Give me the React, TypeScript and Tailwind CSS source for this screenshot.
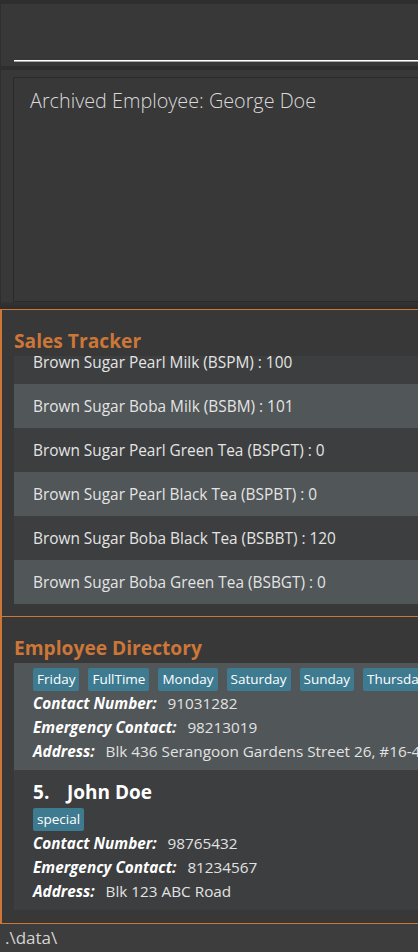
import React from "react";

const sales = [
  "Brown Sugar Pearl Milk (BSPM) : 100",
  "Brown Sugar Boba Milk (BSBM) : 101",
  "Brown Sugar Pearl Green Tea (BSPGT) : 0",
  "Brown Sugar Pearl Black Tea (BSPBT) : 0",
  "Brown Sugar Boba Black Tea (BSBBT) : 120",
  "Brown Sugar Boba Green Tea (BSBGT) : 0",
];

type Emp = {
  idx: number;
  name: string;
  tags: string[];
  contact: string;
  emergency: string;
  address: string;
};

const employees: Emp[] = [
  {
    idx: 4,
    name: "George Doe",
    tags: ["Friday", "FullTime", "Monday", "Saturday", "Sunday", "Thursday"],
    contact: "91031282",
    emergency: "98213019",
    address: "Blk 436 Serangoon Gardens Street 26, #16-43",
  },
  {
    idx: 5,
    name: "John Doe",
    tags: ["special"],
    contact: "98765432",
    emergency: "81234567",
    address: "Blk 123 ABC Road",
  },
];

function Field({ label, value, h }: { label: string; value: string; h: string }) {
  return (
    <div className={`${h} flex items-center text-[15.3px]`}>
      <span className="font-bold italic text-white mr-[11px]">{label}</span>
      <span className="text-[#e2e2e2]">{value}</span>
    </div>
  );
}

function Card({ e, light, scrolled }: { e: Emp; light: boolean; scrolled?: boolean }) {
  return (
    <div
      className={`pl-[19px] pb-[6px] flex flex-col whitespace-nowrap ${
        scrolled ? "pt-[5px]" : "pt-[8px]"
      } ${light ? "bg-[#515658]" : "bg-[#3c3e3f]"}`}
    >
      {!scrolled && (
        <div className="h-[28px] mb-[2px] flex items-center text-[19px] font-bold text-white">
          <span className="w-[34px]">{e.idx}.</span>
          <span>{e.name}</span>
        </div>
      )}
      <div className="h-[23px] flex gap-[9px]">
        {e.tags.map((t) => (
          <span
            key={t}
            className="h-[23px] px-[4px] flex items-center rounded-[2px] bg-[#3e7b91] text-white text-[13.5px]"
          >
            {t}
          </span>
        ))}
      </div>
      <Field label="Contact Number:" value={e.contact} h="h-[24px]" />
      <Field label="Emergency Contact:" value={e.emergency} h="h-[24px]" />
      <Field label="Address:" value={e.address} h="h-[25px]" />
    </div>
  );
}

export default function App() {
  return (
    <div className="w-[418px] h-[952px] overflow-hidden bg-[#383838] flex flex-col font-['Open_Sans','Noto_Sans',sans-serif]">
      {/* command box */}
      <div className="h-[70px] shrink-0 flex flex-col border-l border-[#2e2e2e]">
        <div className="h-[4px] bg-[#2e2e2e]" />
        <div className="flex-1" />
        <div className="ml-[13px] h-[1px] bg-white" />
        <div className="ml-[13px] h-[1px] bg-[#a8a8a8]" />
        <div className="h-[4px]" />
        <div className="h-[4px] bg-[#2e2e2e]" />
      </div>

      {/* result display */}
      <div className="h-[239px] shrink-0 flex flex-col border-l border-[#2e2e2e]">
        <div className="h-[7px]" />
        <div className="ml-[12px] h-[225px] border border-r-0 border-[#2a2a2a] bg-[#383838] pl-[16px] pt-[10px]">
          <div className="text-[19.8px] leading-[26px] font-light text-[#dadada] whitespace-nowrap">
            Archived Employee: George Doe
          </div>
        </div>
        <div className="flex-1 bg-gradient-to-b from-[#333333] to-[#2c2c2c]" />
      </div>

      {/* sales tracker */}
      <div className="shrink-0 border-t border-l-2 border-[#cc7638] pt-[17px] pb-[12px] bg-[#383838]">
        <div className="pl-[12px] h-[27px] text-[19.2px] leading-[27px] font-bold text-[#cc7638]">
          Sales Tracker
        </div>
        <div className="mt-[2px] ml-[12px] h-[248px] overflow-hidden">
          <div className="-mt-[16px]">
            {sales.map((s, i) => (
              <div
                key={s}
                className={`h-[44px] flex items-center pl-[19px] pt-[2px] text-[15.4px] text-[#e4e4e4] whitespace-nowrap ${
                  i % 2 === 0 ? "bg-[#3c3e3f]" : "bg-[#515658]"
                }`}
              >
                {s}
              </div>
            ))}
          </div>
        </div>
      </div>

      {/* employee directory */}
      <div className="shrink-0 border-t border-b border-l-2 border-[#cc7638] pt-[17px] pb-[12px] bg-[#383838]">
        <div className="pl-[12px] h-[27px] text-[19.2px] leading-[27px] font-bold text-[#cc7638]">
          Employee Directory
        </div>
        <div className="mt-[2px] ml-[12px] h-[248px] overflow-hidden">
          {employees.map((e, i) => (
            <Card key={e.idx} e={e} light={i % 2 === 0} scrolled={i === 0} />
          ))}
        </div>
      </div>

      {/* status bar */}
      <div className="flex-1 bg-[#3d3d3d] pl-[5px] flex items-center text-[17px] text-[#d4d4d4]">
        .\data\
      </div>
    </div>
  );
}
